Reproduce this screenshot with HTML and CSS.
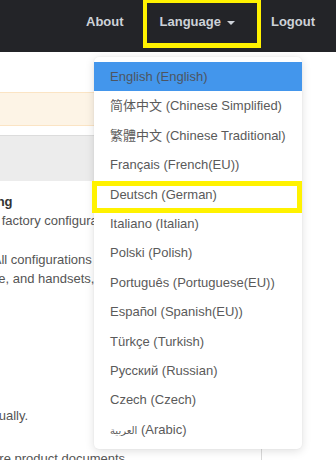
FILE: index.html
```html
<!DOCTYPE html>
<html lang="en">
<head>
<meta charset="utf-8">
<title>Language</title>
<link rel="stylesheet" href="styles.css">
</head>
<body>
<header class="navbar">
  <nav class="nav">
    <a class="nav-link" href="#">About</a>
    <a class="nav-link" href="#">Language <span class="caret"></span></a>
    <a class="nav-link" href="#">Logout</a>
  </nav>
  <div class="hl-nav"></div>
  <ul class="dropdown">
    <li class="active">English (English)</li>
    <li><span class="sc">简体中文</span> (Chinese Simplified)</li>
    <li><span class="tc">繁體中文</span> (Chinese Traditional)</li>
    <li>Français (French(EU))</li>
    <li class="marked">Deutsch (German)<span class="hl-item"></span></li>
    <li>Italiano (Italian)</li>
    <li>Polski (Polish)</li>
    <li>Português (Portuguese(EU))</li>
    <li>Español (Spanish(EU))</li>
    <li>Türkçe (Turkish)</li>
    <li>Русский (Russian)</li>
    <li>Czech (Czech)</li>
    <li><span class="ar">العربية</span> (Arabic)</li>
  </ul>
</header>
<div class="page">
  <main class="main">
    <div class="col">
      <div class="alert"></div>
      <div class="panel-heading"></div>
      <div class="panel-body">
        <p class="line title">Reset to Factory Setting</p>
        <p class="line">Resets the phone to the factory configuration.</p>
        <p class="line gap shift-a">This cannot be undone. All configurations</p>
        <p class="line shift-b">network, phonebook, base, and handsets,</p>
        <p class="line far">Configure the base manually.</p>
        <p class="line near shift-c">Visit our websites for more product documents.</p>
      </div>
    </div>
  </main>
  <aside class="side"></aside>
</div>
</body>
</html>
```
FILE: styles.css
```css
html, body {
  margin: 0;
  padding: 0;
}
body {
  width: 336px;
  height: 460px;
  overflow: hidden;
  background: #ffffff;
  font-family: "Liberation Sans", Arial, sans-serif;
  font-size: 13px;
  color: #555555;
}

.navbar {
  position: relative;
  height: 52px;
  background: #232428;
  z-index: 5;
}
.nav {
  display: flex;
  justify-content: flex-end;
  padding-right: 3px;
}
.nav-link {
  display: flex;
  align-items: center;
  padding: 12px 18px;
  line-height: 20px;
  font-weight: bold;
  font-size: 13px;
  color: #cdd2d8;
  text-decoration: none;
}
.caret {
  display: inline-block;
  width: 0;
  height: 0;
  margin-left: 6px;
  margin-top: 1px;
  border-top: 4px solid #cdd2d8;
  border-left: 4px solid transparent;
  border-right: 4px solid transparent;
}

.hl-nav {
  position: absolute;
  left: 143px;
  top: -1px;
  width: 118px;
  height: 49px;
  box-sizing: border-box;
  border: 4px solid #fff200;
  border-bottom-width: 5px;
}

.dropdown {
  position: absolute;
  top: 57px;
  right: 34px;
  width: 208px;
  margin: 0;
  padding: 5px 0 5px;
  list-style: none;
  background: #ffffff;
  border-radius: 5px;
  box-shadow: 0 2px 10px rgba(0, 0, 0, 0.13), 0 0 2px rgba(0, 0, 0, 0.06);
}
.dropdown li {
  position: relative;
  height: 19.4px;
  padding: 5px 16px;
  line-height: 19.4px;
  font-size: 13px;
  color: #5a5a5a;
  white-space: nowrap;
}
.dropdown li.active {
  background: #4396ec;
  color: #4d5561;
}
.sc,
.tc,
.ar {
  line-height: 13px;
}
.sc {
  font-family: "Noto Sans CJK SC", sans-serif;
}
.tc {
  font-family: "Noto Sans CJK TC", sans-serif;
}
.ar {
  font-family: "DejaVu Sans", sans-serif;
  font-size: 10px;
}
.hl-item {
  position: absolute;
  left: -2px;
  right: 0;
  top: 1px;
  height: 32px;
  box-sizing: border-box;
  border: 5px solid #fff200;
}

.page {
  display: flex;
}
.main {
  flex: 0 0 402px;
  margin-left: -140px;
  padding-top: 40px;
}
.col {
  border-right: 1px solid #d9d9d9;
  min-height: 368px;
}
.alert {
  height: 32px;
  background: #fdf4e6;
  border-top: 1px solid #fbe4c4;
  border-bottom: 1px solid #fbe4c4;
  margin-bottom: 9px;
}
.panel-heading {
  height: 45px;
  background: #ececec;
  border-top: 1px solid #dcdcdc;
}
.panel-body {
  padding-top: 11px;
}
.line {
  margin: 0;
  line-height: 19px;
  white-space: nowrap;
  color: #555555;
}
.title {
  font-weight: bold;
  color: #333333;
  text-indent: 3px;
}
.gap {
  margin-top: 20px;
}
.far {
  margin-top: 118px;
}
.near {
  margin-top: 24px;
}
.shift-a {
  text-indent: -6px;
}
.shift-b {
  text-indent: -7px;
}
.shift-c {
  text-indent: -2px;
}
.side {
  flex: 1;
}
```
